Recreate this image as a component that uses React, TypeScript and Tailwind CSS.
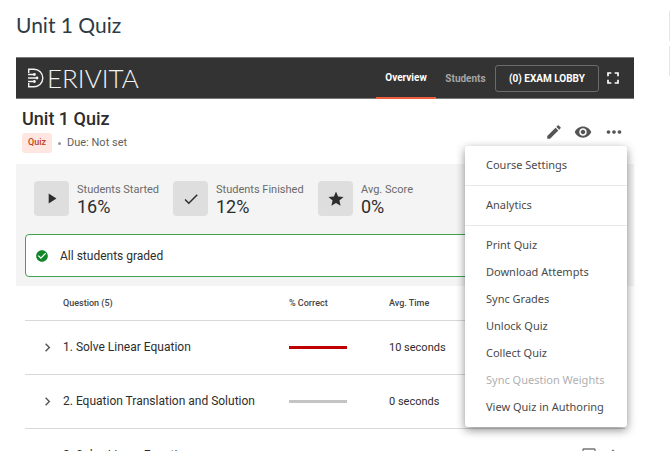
import React from "react";
import {
  MdCheck,
  MdCheckCircle,
  MdChevronRight,
  MdCreate,
  MdFullscreen,
  MdMoreHoriz,
  MdMoreVert,
  MdOutlineChatBubbleOutline,
  MdPlayArrow,
  MdRemoveRedEye,
  MdStar,
} from "react-icons/md";

const stats = [
  { label: "Students Started", value: "16%", icon: <MdPlayArrow size={17} />, width: "w-[139px]" },
  { label: "Students Finished", value: "12%", icon: <MdCheck size={18} />, width: "w-[145px]" },
  { label: "Avg. Score", value: "0%", icon: <MdStar size={18} />, width: "w-[110px]" },
];

const questions = [
  { title: "1. Solve Linear Equation", bar: "bg-[#c00000]", time: "10 seconds" },
  { title: "2. Equation Translation and Solution", bar: "bg-[#c4c4c4]", time: "0 seconds" },
  { title: "3. Solve Linear Equation", bar: "bg-[#c4c4c4]", time: "0 seconds" },
];

const menuGroups = [
  ["Course Settings"],
  ["Analytics"],
  [
    "Print Quiz",
    "Download Attempts",
    "Sync Grades",
    "Unlock Quiz",
    "Collect Quiz",
    "Sync Question Weights",
    "View Quiz in Authoring",
  ],
];

function Logo() {
  return (
    <div className="flex items-center gap-0.5 text-[#f2f2f2]">
      <svg width="19" height="20" viewBox="0 0 19 20" fill="none" stroke="currentColor" strokeWidth="1.4" aria-hidden="true">
        <path d="M2.7 5V1.2H8a8.8 8.8 0 0 1 0 17.6H2.7V15" />
        <path d="M2 6.5h6M2 10h8M2 13.5h6" />
        <circle cx="8.4" cy="6.5" r="1.4" fill="currentColor" stroke="none" />
        <circle cx="11" cy="10" r="1.4" fill="currentColor" stroke="none" />
        <circle cx="8.4" cy="13.5" r="1.4" fill="currentColor" stroke="none" />
      </svg>
      <span className="font-[Lato,sans-serif] text-[26px] leading-6 font-light">ERIVITA</span>
    </div>
  );
}

function Menu() {
  return (
    <div
      role="menu"
      className="absolute top-[25px] right-[-2px] z-10 w-[162px] divide-y divide-[#e8e8e8] rounded-[3px] bg-white font-['Noto_Sans',sans-serif] text-[11px] text-[#4a4a4a] shadow-[0_3px_10px_rgba(0,0,0,0.45)]"
    >
      {menuGroups.map((group) => (
        <div key={group[0]} className="py-1.5">
          {group.map((item) => (
            <button
              key={item}
              type="button"
              role="menuitem"
              disabled={item === "Sync Question Weights"}
              className="block h-[27px] w-full px-[21px] text-left whitespace-nowrap disabled:text-[#b0b0b0]"
            >
              {item}
            </button>
          ))}
        </div>
      ))}
    </div>
  );
}

export default function App() {
  return (
    <div className="flex h-screen overflow-hidden bg-white font-[Roboto,sans-serif] text-[#2d2d2d]">
      <main className="min-w-0 flex-1 pr-[35px] pl-4">
        <h1 className="flex h-[57px] items-center pb-2 font-[Lato,sans-serif] text-[21px] text-[#2d3b45]">
          Unit 1 Quiz
        </h1>

        <header className="flex h-[42px] items-center justify-between border-y border-[#777] bg-[#333] pr-[11px] pl-2.5">
          <Logo />
          <nav className="flex h-full items-center text-[10px] font-bold">
            <a href="#overview" className="-mb-px flex h-[41px] w-[60px] items-center justify-center border-b-2 border-[#f0603f] text-white">
              Overview
            </a>
            <a href="#students" className="flex w-[59px] items-center justify-center text-[#a5a5a5]">
              Students
            </a>
            <button type="button" className="h-[27px] w-[104px] rounded-[3px] border border-[#6b6b6b] text-white">
              (0) EXAM LOBBY
            </button>
            <button type="button" aria-label="Full screen" className="ml-1 text-white">
              <MdFullscreen size={20} />
            </button>
          </nav>
        </header>

        <section className="flex h-[65px] items-start justify-between pr-[9px] pl-1.5">
          <div className="pt-2">
            <h2 className="text-lg leading-6 font-medium">Unit 1 Quiz</h2>
            <div className="mt-0.5 flex items-center text-[#5f5f5f]">
              <span className="flex h-5 w-[30px] items-center justify-center rounded-[3px] bg-[#ffe6e0] text-[9px] font-medium text-[#c0411f]">
                Quiz
              </span>
              <span className="mx-1.5 h-[3px] w-[3px] rounded-full bg-[#999]" />
              <span className="text-[11px]">Due: Not set</span>
            </div>
          </div>
          <div className="relative mt-[22px] flex items-center gap-[11px] text-[#555]">
            <button type="button" aria-label="Edit">
              <MdCreate size={18} />
            </button>
            <button type="button" aria-label="Preview">
              <MdRemoveRedEye size={18} />
            </button>
            <button type="button" aria-label="More options" aria-expanded="true">
              <MdMoreHoriz size={22} />
            </button>
            <Menu />
          </div>
        </section>

        <section className="bg-[#f4f4f4] px-[9px] pt-[17px] pb-[9px]">
          <div className="flex pl-[9px]">
            {stats.map((stat) => (
              <div key={stat.label} className={`flex items-center gap-2 ${stat.width}`}>
                <div className="flex h-[35px] w-[35px] shrink-0 items-center justify-center rounded-sm bg-[#dedede]">
                  {stat.icon}
                </div>
                <div className="whitespace-nowrap">
                  <div className="text-[11px] leading-4 text-[#6b6b6b]">{stat.label}</div>
                  <div className="text-lg leading-[17px]">{stat.value}</div>
                </div>
              </div>
            ))}
          </div>
          <div role="status" className="mt-[18px] flex h-[43px] items-center gap-[11px] rounded-sm border border-[#3fa352] bg-white px-[9px] text-xs">
            <MdCheckCircle size={14} className="text-[#14862a]" />
            All students graded
          </div>
        </section>

        <div className="px-[9px]">
          <table className="w-full table-fixed border-collapse text-left">
            <colgroup>
              <col className="w-[38px]" />
              <col />
              <col className="w-[100px]" />
              <col className="w-[192px]" />
              <col className="w-[44px]" />
            </colgroup>
            <thead>
              <tr className="h-[34px] border-b border-[#d8d8d8] text-[9px] text-[#444]">
                <th aria-label="Expand" />
                <th className="pt-0.5 font-medium">Question (5)</th>
                <th className="pt-0.5 font-medium">% Correct</th>
                <th className="pt-0.5 font-medium">Avg. Time</th>
                <th aria-label="Actions" />
              </tr>
            </thead>
            <tbody>
              {questions.map((question) => (
                <tr key={question.title} className="h-[54px] border-b border-[#d8d8d8] text-xs whitespace-nowrap">
                  <td className="pl-3.5">
                    <button type="button" aria-label="Expand question" className="block text-[#555]">
                      <MdChevronRight size={17} />
                    </button>
                  </td>
                  <td>{question.title}</td>
                  <td>
                    <div className={`h-[3px] w-[58px] ${question.bar}`} />
                  </td>
                  <td className="pt-0.5 text-[11px]">{question.time}</td>
                  <td>
                    <div className="flex items-center gap-2 text-[#777]">
                      <button type="button" aria-label="Comments">
                        <MdOutlineChatBubbleOutline size={16} />
                      </button>
                      <button type="button" aria-label="Question options">
                        <MdMoreVert size={16} />
                      </button>
                    </div>
                  </td>
                </tr>
              ))}
            </tbody>
          </table>
        </div>
      </main>

      <aside className="flex w-px flex-col gap-[5px] pt-[11px]">
        <div className="h-[30px] bg-[#e6e6e6]" />
        <div className="h-[30px] bg-[#e6e6e6]" />
      </aside>
    </div>
  );
}
